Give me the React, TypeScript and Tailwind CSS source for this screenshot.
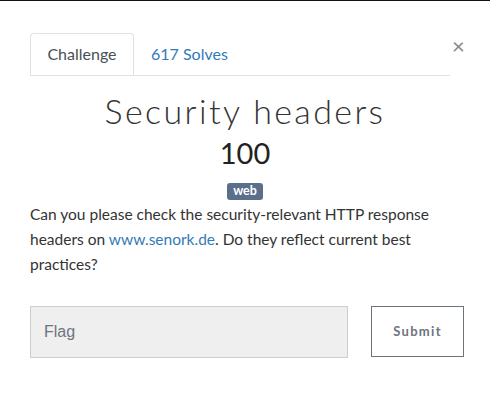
export default function App() {
  return (
    <div className="relative h-[403px] w-[490px] overflow-hidden bg-white font-['Lato','Open_Sans',sans-serif] text-[#212529]">
      <div className="h-px w-full bg-[#111]" />
      <div className="px-[30px] pt-[32px]">
        <div className="flex items-start">
          <div className="flex w-[420px] shrink-0 border-b border-[#dee2e6]">
            <div className="-mb-px flex h-[42px] w-[104px] items-center justify-center rounded-t border border-b-white border-[#dee2e6] bg-white text-[16px] text-[#495057]">
              Challenge
            </div>
            <div className="flex h-[42px] items-center px-[17px] text-[16px] text-[#337ab7]">
              617 Solves
            </div>
          </div>
          <button className="ml-[2px] mt-[2px] text-[22px] leading-none text-[#888]">×</button>
        </div>

        <h1 className="mt-[14px] text-center text-[34px] font-light leading-[42px] tracking-[0.07em] text-[#333]">
          Security headers
        </h1>
        <div className="mt-[4px] text-center text-[29px] leading-[34px] text-[#222]">100</div>
        <div className="mt-[13px] flex justify-center">
          <span className="flex h-[17px] items-center rounded-[3px] bg-[#5b6e8c] px-[6px] text-[12.5px] font-bold text-white">web</span>
        </div>
        <p className="mt-[2px] pr-[20px] text-[15.5px] leading-[25px] text-[#333]">
          Can you please check the security-relevant HTTP response headers on{" "}
          <a className="text-[#337ab7]">www.senork.de</a>. Do they reflect current best practices?
        </p>

        <div className="mt-[29px] flex items-start">
          <input
            placeholder="Flag"
            className="h-[52px] w-[318px] shrink-0 border border-[#ccced2] bg-[#efefef] px-[13px] font-['Liberation_Sans',sans-serif] text-[16px] placeholder:text-[#6c757d]"
          />
          <button className="ml-[23px] h-[51px] w-[93px] shrink-0 border border-[#6c757d] bg-white text-[13px] font-bold tracking-[0.1em] text-[#6c757d]">
            Submit
          </button>
        </div>
      </div>
    </div>
  );
}
